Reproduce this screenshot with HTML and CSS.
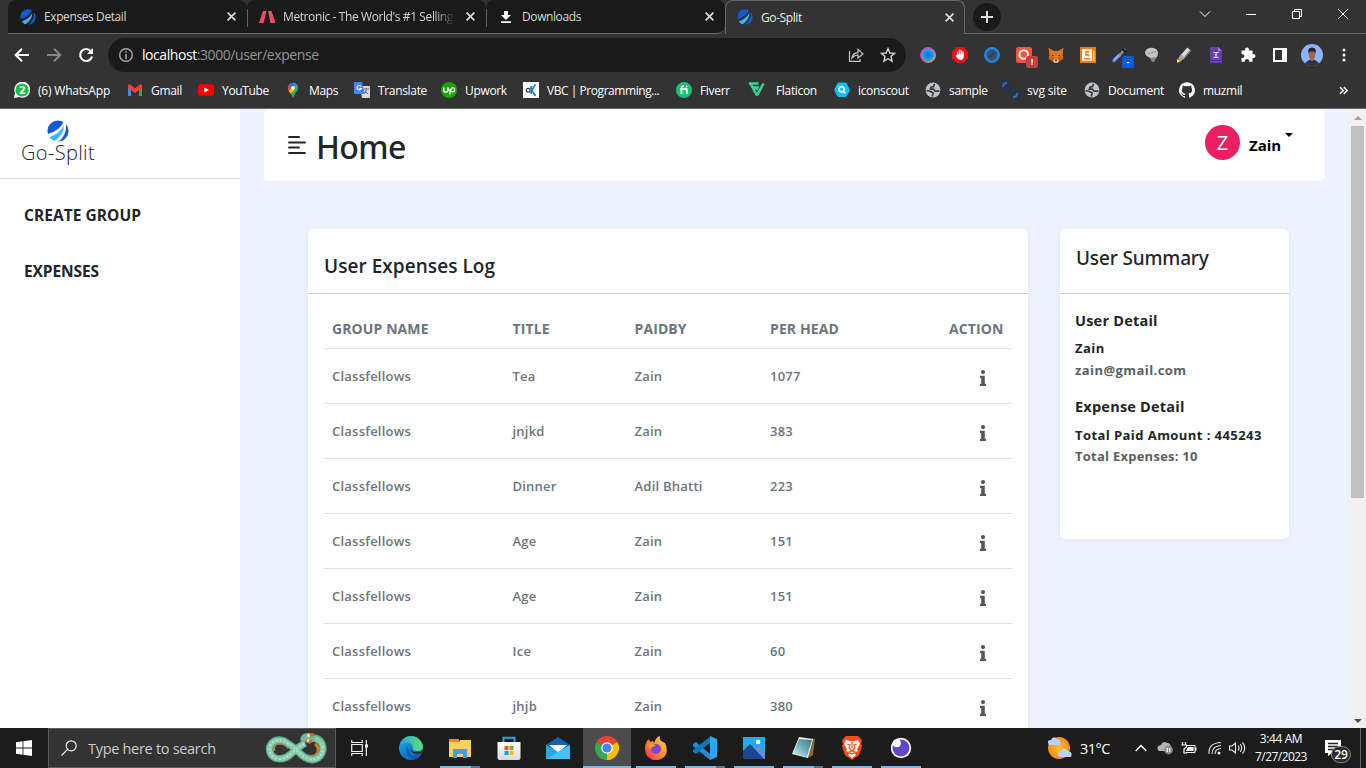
FILE: index.html
```html
<!DOCTYPE html>
<html lang="en">
<head>
<meta charset="utf-8">
<title>Go-Split</title>
<link rel="stylesheet" href="styles.css">
</head>
<body>
<svg class="defs" aria-hidden="true">
  <defs>
    <clipPath id="ball"><circle cx="12" cy="12" r="11.5"/></clipPath>
    <linearGradient id="edgeA" x1="0" y1="0" x2="1" y2="1"><stop offset="0" stop-color="#27a9e5"/><stop offset=".5" stop-color="#0f7fd0"/><stop offset="1" stop-color="#0b4f9e"/></linearGradient>
    <linearGradient id="edgeB" x1="0" y1="0" x2="1" y2="0"><stop offset="0" stop-color="#2aa5df"/><stop offset="1" stop-color="#5fe070"/></linearGradient>
    <linearGradient id="fire" x1="1" y1="0" x2="0" y2="1"><stop offset="0" stop-color="#ffe14a"/><stop offset=".5" stop-color="#ff8a25"/><stop offset="1" stop-color="#f0246c"/></linearGradient>
    <linearGradient id="ring" x1="0" y1="0" x2="1" y2="1"><stop offset="0" stop-color="#d63bb0"/><stop offset=".5" stop-color="#e8489a"/><stop offset="1" stop-color="#ffb03b"/></linearGradient>
    <linearGradient id="snow" x1="0" y1="0" x2="0" y2="1"><stop offset="0" stop-color="#ffffff"/><stop offset="1" stop-color="#d8d8dc"/></linearGradient>
    <linearGradient id="glass" x1="0" y1="1" x2="1" y2="0"><stop offset="0" stop-color="#d9f2f6"/><stop offset=".5" stop-color="#6fb1bd"/><stop offset="1" stop-color="#3a7682"/></linearGradient>
    <radialGradient id="sun"><stop offset="0" stop-color="#ffc53a"/><stop offset="1" stop-color="#f28a1b"/></radialGradient>
    <radialGradient id="blueDot"><stop offset="0" stop-color="#0b6fc0"/><stop offset="1" stop-color="#27b3ff"/></radialGradient>
    <symbol id="logo" viewBox="0 0 24 24"><g clip-path="url(#ball)"><path fill="#0d5bd7" d="M0 0H18.500Q16 11 0 15.500Z"/><path fill="#36b8fb" d="M2 19Q14 15 18.500 6Q19 16 7 24Z"/><path fill="#0d5bd7" d="M20.700 3.500L25 8V24H12Q22 17 20.700 3.500Z"/></g></symbol>
    <symbol id="close" viewBox="0 0 8 8"><path d="M.5.5 7.5 7.5M7.5.5.5 7.5" stroke="currentColor" stroke-width="1.500"/></symbol>
    <symbol id="globe" viewBox="0 0 16 16"><circle cx="8" cy="8" r="7.400" fill="#bfc3c8"/><path d="M9.500 2 8.600 4.600 6 5.200 5.400 7.200H8.500L10.200 9.200H14.500M1.500 8.500 5.600 9.500 8.200 11.200 7.200 14.500" fill="none" stroke="#3a3b3d" stroke-width="1.700"/></symbol>
    <symbol id="info" viewBox="0 0 6 16"><circle cx="3" cy="2.100" r="2.100" fill="#55585b"/><path d="M0 5.800H4.800V13.700H6V16H0V13.700H1.200V8.100H0Z" fill="#55585b"/></symbol>
  </defs>
</svg>

<div class="desktop">
  <header class="chrome">
    <div class="tabstrip">
      <div class="tab tab-first"><svg class="i16"><use href="#logo"/></svg><span class="tab-title">Expenses Detail</span><svg class="x"><use href="#close"/></svg></div>
      <div class="tab tab-mid"><svg class="i16" viewBox="0 0 16 16"><path fill="#f8485e" d="M4 2H7.500L4.500 14H0ZM9 2h3.500L16.500 14H11.500Z"/></svg><span class="tab-title fade">Metronic - The World's #1 Selling</span><svg class="x"><use href="#close"/></svg></div>
      <div class="tab tab-last"><svg class="i16" viewBox="0 0 16 16"><path fill="#fff" d="M6 2h4v4h3L8 11 3 6h3ZM3 12.300h10V14H3Z"/></svg><span class="tab-title">Downloads</span><svg class="x"><use href="#close"/></svg></div>
      <div class="tab tab-active"><svg class="i16"><use href="#logo"/></svg><span class="tab-title">Go-Split</span><svg class="x"><use href="#close"/></svg></div>
      <div class="tab-end"><span class="newtab"><svg width="12" height="12" viewBox="0 0 12 12"><path d="M6 0V12M0 6H12" stroke="#ddd" stroke-width="2"/></svg></span></div>
      <div class="window-buttons">
        <svg viewBox="0 0 12 12"><path d="M1 3.500 6 8.500 11 3.500" class="wl"/></svg>
        <svg viewBox="0 0 12 12"><path d="M1 6.500H11" class="wl"/></svg>
        <svg viewBox="0 0 12 12"><path d="M1.500 3.500H8.500V10.500H1.500ZM3.500 3.500V1.500H10.500V8.500H8.500" class="wl"/></svg>
        <svg viewBox="0 0 12 12"><path d="M1 1 11 11M11 1 1 11" class="wl"/></svg>
      </div>
    </div>

    <div class="toolbar">
      <div class="nav-buttons">
        <svg viewBox="0 0 16 16"><path d="M15 8H2M8 1.700 1.700 8 8 14.300" fill="none" stroke="#fff" stroke-width="2"/></svg>
        <svg viewBox="0 0 16 16"><path d="M1 8H14M8 1.700 14.300 8 8 14.300" fill="none" stroke="#858585" stroke-width="2"/></svg>
        <svg viewBox="0 0 16 16"><path d="M12.800 4.100A6 6 0 1 0 14 9.500" fill="none" stroke="#fff" stroke-width="2.100"/><path d="M15 1V7H9Z" fill="#fff"/></svg>
      </div>
      <div class="address">
        <svg class="i14" viewBox="0 0 14 14"><circle cx="7" cy="7" r="6.300" fill="none" stroke="#a7a9ac" stroke-width="1.400"/><path d="M7 3.200V4.800M7 6V11" stroke="#a7a9ac" stroke-width="1.600"/></svg>
        <span class="url"><b>localhost</b>:3000/user/expense</span>
        <svg class="i16 share" viewBox="0 0 16 16"><path d="M1.500 4V14.300H12V12M4 11Q4.500 6 10 5.600V2.300L15 7 10 11V8Q6.500 8 4 11Z" fill="none" stroke="#c5c5c5" stroke-width="1.200"/></svg>
        <svg class="i16" viewBox="0 0 16 16"><path d="M8 1.600 9.900 6 14.600 6.400 11 9.500 12.100 14.200 8 11.700 3.900 14.200 5 9.500 1.400 6.400 6.100 6Z" fill="none" stroke="#d0d0d0" stroke-width="1.400"/></svg>
      </div>
      <div class="extensions">
        <svg viewBox="0 0 16 16"><circle cx="8" cy="8" r="7.200" fill="url(#blueDot)" stroke="url(#ring)" stroke-width="1.500"/></svg>
        <svg viewBox="0 0 16 16"><path fill="#e11313" d="M4.700 0h6.600L16 4.700v6.600L11.300 16H4.700L0 11.300V4.700Z"/><path d="M5.700 5V9M7.500 3.200V8M9.300 3.500V8M11 5V9" stroke="#fff" stroke-width="1.300" stroke-linecap="round"/><path fill="#fff" d="M5 7.500H11.700Q12 13 8.800 13 6 13 3.500 8.700Z"/></svg>
        <svg viewBox="0 0 16 16"><circle cx="8" cy="8" r="6.800" fill="#3a5368" stroke="#168cf0" stroke-width="2.300"/><path d="m5 11 6-6" stroke="#2c4254" stroke-width="2"/></svg>
        <span class="badged"><svg viewBox="0 0 16 16"><rect width="16" height="16" rx="2" fill="#fb513c"/><circle cx="7.700" cy="7.500" r="4.300" fill="none" stroke="#fff" stroke-width="2"/></svg><i class="badge red">!</i></span>
        <svg viewBox="0 0 16 16"><path fill="#e27520" d="M.5 1 6 4h4l5.500-3-1 7 1 4-4 2-2 2h-3l-2-2-4-2 1-4Z"/><path fill="#b85516" d="m1 11 4-1 1 4-4-1ZM15 11l-4-1-1 4 4-1Z"/><path fill="#ddc5ae" d="m5 12 2 1h2l2-1-1 3.500H6Z"/><path fill="#282828" d="M4 7.500 6.300 9H4ZM12 7.500 9.700 9H12ZM7 13h2v1H7Z"/></svg>
        <svg viewBox="0 0 16 16"><path fill="#f57c00" d="M0 0H16V16H0Z"/><path fill="#fff" d="M2 2.300H12V13.700H2ZM13 4H14.300V13.700H13Z"/><path d="M9.300 4.800H6V8H8.500V9.500M4 11.700h6.500" fill="none" stroke="#f57c00" stroke-width="1.500"/></svg>
        <span class="badged"><svg viewBox="0 0 16 16"><path d="m2 13.500 5.500-5.500" stroke="#5c98e8" stroke-width="3.200" stroke-linecap="round"/><path d="m2.300 12.500 5-5" stroke="#c8defa" stroke-width="1"/><path d="m7 9 6-7" stroke="#8b9194" stroke-width="2.500"/><path d="m10.500 2 3.500 3.500" stroke="#17191b" stroke-width="1.800"/></svg><i class="badge blue">-</i></span>
        <svg viewBox="0 0 16 16"><path d="M1 5Q3 .5 8 .8 14 1.500 14 6 14 10 10.500 12L10 15 5.500 10.500Q1 9 1 5Z" fill="#c4c5c5"/><path d="M6 11 12 10 10.500 14.500 8 15Z" fill="#858585"/><path d="M4.500 6.500 12 4.500" stroke="#666" stroke-dasharray="1.500 1.500"/></svg>
        <svg viewBox="0 0 16 16"><path d="m6.500 9.500 6.500-7.500" stroke="#ddd" stroke-width="4.500"/><path d="m9 10 6-7" stroke="#777" stroke-width="1.500"/><path d="m5 7 4 4-4 3-3-2Z" fill="#aaa"/><path d="m1 12 4 2-4 2Z" fill="#fbef18"/></svg>
        <svg viewBox="0 0 16 16"><path fill="#673ab7" d="M2 0h8l4 4v12H2Z"/><path fill="#a387d2" d="M10 0v4h4Z"/><path d="M5.500 5.500h5M8 5.500v5M5.500 10.500h5" stroke="#fff" stroke-width="1.200"/></svg>
        <svg viewBox="0 0 16 16"><path fill="#fff" d="M1.500 3.500H5Q4.800.5 7 .5T9 3.500H12.500V7Q15.500 6.800 15.500 9T12.500 11V14.800H9.200Q9.300 12 7 12T4.800 14.800H1.500V11Q4.300 11 4.300 9T1.500 7Z"/></svg>
        <svg viewBox="0 0 16 16"><path fill="none" stroke="#fff" stroke-width="2" d="M2 2H14V14H2Z"/><path fill="#fff" d="M10 2h4v12h-4Z"/></svg>
        <svg class="profile" viewBox="0 0 22 22"><clipPath id="face"><circle cx="11" cy="11" r="11"/></clipPath><g clip-path="url(#face)"><path fill="#8db3fb" d="M0 0h22v22H0Z"/><path fill="#2b3549" d="m4 19 4-3h6l4 3v4H4Z"/><path fill="#9b674c" d="M8 7h6v6l-2 4h-2l-2-4Z"/><path fill="#222028" d="M7.500 10Q6 3.500 11 3.500t3.500 6.500l-1-2.500H8.500Z"/></g></svg>
        <svg viewBox="0 0 16 16"><circle cx="8" cy="3" r="1.500" fill="#fff"/><circle cx="8" cy="8" r="1.500" fill="#fff"/><circle cx="8" cy="13" r="1.500" fill="#fff"/></svg>
      </div>
    </div>

    <nav class="bookmarks">
      <a class="wide"><svg viewBox="0 0 16 16"><path fill="#fff" d="M0 16 1 11A8 8 0 1 1 5 15Z"/><circle cx="8" cy="8" r="6.600" fill="#10bf4c"/><text x="8" y="12" text-anchor="middle" class="wa">2</text></svg><span>(6) WhatsApp</span></a>
      <a><svg viewBox="0 0 16 16"><path fill="#4285f4" d="M1 3.500 4 6V14H1Z"/><path fill="#34a853" d="M12 6 15 3.500V14H12Z"/><path fill="#ea4335" d="M1 6V3L2.500 2 8 6.300 13.500 2 15 3V6L8 11Z"/></svg><span>Gmail</span></a>
      <a><svg viewBox="0 0 16 16"><rect y="2.200" width="16" height="11.600" rx="2.600" fill="#f00"/><path fill="#fff" d="m6.300 5.500 4.500 2.500-4.500 2.500Z"/></svg><span>YouTube</span></a>
      <a><svg viewBox="0 0 16 16"><path fill="#34a853" d="M2.800 6A5.200 5.200 0 1 1 13.200 6Q13 8.500 10.500 11L8 16 5.500 11Q3 8.500 2.800 6Z"/><path fill="#4285f4" d="M7 .9A5.200 5.200 0 0 1 12.300 3L8.500 7Z"/><path fill="#ea4335" d="M4 2.700 7 5.500 4 9Q1.500 5.500 4 2.700Z"/><path fill="#1a73e8" d="M4 2.700Q5.300 1 7.500.8L9 4 6.500 5.500Z"/><path fill="#fbbc04" d="M3.700 9 7 5.500 9.500 8 5.800 11.800Z"/><circle cx="8" cy="5.800" r="1.900" fill="#fff"/></svg><span>Maps</span></a>
      <a><svg viewBox="0 0 16 16"><path fill="#d8d9dd" d="M6 4h9q1 0 1 1v10q0 1-1 1H8Z"/><path fill="#4285f4" d="M0 0H8L11 12H1Q0 12 0 11Z"/><path d="M7 4.500A2.200 2.200 0 1 0 7.200 6.500H5.300" fill="none" stroke="#fff" stroke-width="1.100"/><path d="M10 7h5M12.300 6v1q0 3-2 5M11 9l3 3" fill="none" stroke="#70757a"/></svg><span>Translate</span></a>
      <a><svg viewBox="0 0 16 16"><circle cx="8" cy="8" r="8" fill="#14a800"/><path d="M2.800 5.500v2.700q0 2 2 2t2-2V5.500q1 3.200 3.600 4.400M8.600 12.500l1.200-5q.7-1.800 2.200-1.800t1.600 2-1.700 2.200q-2 0-3-2" fill="none" stroke="#fff" stroke-width="1.300"/></svg><span>Upwork</span></a>
      <a class="tight"><svg viewBox="0 0 16 16"><path fill="#fff" d="M0 0h16v16H0Z"/><circle cx="5.200" cy="8.200" r="1.900" fill="none" stroke="#26364b" stroke-width="1.200"/><path d="M8.200 4V12M12.500 2.500 8.800 8l3.700 6" fill="none" stroke="#1684df" stroke-width="1.800"/></svg><span>VBC | Programming...</span></a>
      <a><svg viewBox="0 0 16 16"><circle cx="8" cy="8" r="8" fill="#1dbf73"/><path d="M5.500 12V6.200Q5.500 4 8 4M4 7.200H10.800V12" fill="none" stroke="#fff" stroke-width="1.700"/><circle cx="10.500" cy="4.400" r="1" fill="#fff"/></svg><span>Fiverr</span></a>
      <a><svg class="flat" viewBox="0 0 16 16"><path d="M0 1.500H9.500M1.500 1.500 8 13.500M4 5.500H8.500L7.500 8M14.500 1.500 8 13.500" fill="none" stroke="#3ed19b" stroke-width="2.600"/></svg><span>Flaticon</span></a>
      <a><svg viewBox="0 0 16 16"><path fill="#08c0fa" d="M5 .5h6q1 0 1.700 1L15.500 7q.5 1 0 2l-2.800 5q-.7 1-1.700 1H5q-1 0-1.700-1L.5 9q-.5-1 0-2l2.800-5.500Q4 .5 5 .5Z"/><circle cx="7.500" cy="7.200" r="2.600" fill="none" stroke="#fff" stroke-width="1.600"/><path d="m9.300 9.300 2 2" stroke="#fff" stroke-width="1.800"/></svg><span>iconscout</span></a>
      <a><svg><use href="#globe"/></svg><span>sample</span></a>
      <a><svg viewBox="0 0 16 16"><path d="M.8 5Q1 1 5 .8M15.200 11Q15 15 11 15.200" fill="none" stroke="#1976ed" stroke-width="1.800"/><path d="M11 5Q8 3.500 6 5t1 3 3 2.500-5 1" fill="none" stroke="#17365f" stroke-width="2.200"/></svg><span class="svgsite">svg site</span></a>
      <a><svg><use href="#globe"/></svg><span>Document</span></a>
      <a><svg viewBox="0 0 16 16"><path fill="#fff" d="M8 .2a8 8 0 0 0-2.500 15.600c.4.1.5-.2.5-.4v-1.500c-2.200.5-2.700-1-2.700-1-.4-.9-.9-1.100-.9-1.100-.7-.5.1-.5.1-.5.8.1 1.200.8 1.200.8.7 1.200 1.900.9 2.300.7.1-.5.3-.9.5-1.100-1.800-.2-3.600-.9-3.600-4 0-.9.3-1.600.8-2.100-.1-.2-.4-1 .1-2.100 0 0 .7-.2 2.200.8a7.500 7.500 0 0 1 4 0c1.500-1 2.200-.8 2.200-.8.4 1.100.2 1.900.1 2.100.5.6.8 1.300.8 2.200 0 3-1.900 3.700-3.700 3.900.3.3.6.8.6 1.500v2.200c0 .2.1.5.5.4A8 8 0 0 0 8 .2Z"/></svg><span>muzmil</span></a>
      <a><svg class="more" viewBox="0 0 8 8"><path d="M.8 1 3.800 4l-3 3M4.300 1l3 3-3 3" fill="none" stroke="#fff" stroke-width="1.300"/></svg></a>
    </nav>
  </header>

  <div class="page">
    <aside class="sidebar">
      <div class="brand"><svg class="brand-mark"><use href="#logo"/></svg><span class="brand-name">Go-Split</span></div>
      <a class="side-link create">CREATE GROUP</a>
      <a class="side-link exp">EXPENSES</a>
    </aside>
    <main class="content">
      <div class="topbar">
        <svg class="menu" viewBox="0 0 18 18"><path d="M1 1H11M1 6.500H17M1 11.500H11M1 17H17" stroke="#212529" stroke-width="1.900" stroke-linecap="round"/></svg>
        <h1>Home</h1>
        <span class="avatar">Z</span><span class="user">Zain</span><span class="caret"></span>
      </div>
      <div class="cards">
        <section class="card log">
          <div class="card-head"><h2>User Expenses Log</h2></div>
          <div class="table">
            <div class="row head"><span>GROUP NAME</span><span>TITLE</span><span>PAIDBY</span><span>PER HEAD</span><span>ACTION</span></div>
            <div class="row"><span>Classfellows</span><span>Tea</span><span>Zain</span><span>1077</span><svg><use href="#info"/></svg></div>
            <div class="row"><span>Classfellows</span><span>jnjkd</span><span>Zain</span><span>383</span><svg><use href="#info"/></svg></div>
            <div class="row"><span>Classfellows</span><span>Dinner</span><span>Adil Bhatti</span><span>223</span><svg><use href="#info"/></svg></div>
            <div class="row"><span>Classfellows</span><span>Age</span><span>Zain</span><span>151</span><svg><use href="#info"/></svg></div>
            <div class="row"><span>Classfellows</span><span>Age</span><span>Zain</span><span>151</span><svg><use href="#info"/></svg></div>
            <div class="row"><span>Classfellows</span><span>Ice</span><span>Zain</span><span>60</span><svg><use href="#info"/></svg></div>
            <div class="row"><span>Classfellows</span><span>jhjb</span><span>Zain</span><span>380</span><svg><use href="#info"/></svg></div>
          </div>
        </section>
        <section class="card summary">
          <div class="card-head"><h3>User Summary</h3></div>
          <div class="summary-body">
            <h4>User Detail</h4>
            <p class="name">Zain</p>
            <p class="muted">zain@gmail.com</p>
            <h4 class="second">Expense Detail</h4>
            <p class="paid">Total Paid Amount : 445243</p>
            <p class="muted total">Total Expenses: 10</p>
          </div>
        </section>
      </div>
    </main>
    <div class="scrollbar"><i class="up"></i><div class="thumb"></div><i class="down"></i></div>
  </div>

  <footer class="taskbar">
    <div class="start"><svg width="16" height="16" viewBox="0 0 16 16"><path fill="#fff" d="M0 2.300 6.600 1.300V7.500H0ZM7.400 1.200 16 0V7.500H7.400ZM0 8.400H6.600V14.700L0 13.800ZM7.400 8.400H16V16L7.400 14.800Z"/></svg></div>
    <div class="search">
      <svg width="16" height="16" viewBox="0 0 16 16"><circle cx="10.200" cy="5.800" r="5" fill="none" stroke="#eee" stroke-width="1.200"/><path d="M6.600 9.400.5 15.500" stroke="#eee" stroke-width="1.200"/></svg>
      <span>Type here to search</span>
      <svg class="snake" width="62" height="34" viewBox="0 0 62 34"><path d="M9 20Q7 13 14 12 20 12 24 17M38 24Q50 28 53 21 54 16 50 13" fill="none" stroke="#dc7a21" stroke-width="3"/><path d="M40 12Q33 16 27 22 19 30 10 27 3 23 5 15 9 7 19 10 23 12 29 17L38 25Q46 31 53 27 60 21 57 13 54 6 44 7" fill="none" stroke="#55a98b" stroke-width="7.500"/><path d="M40 12Q33 16 27 22 19 30 10 27 3 23 5 15 9 7 19 10 23 12 29 17L38 25Q46 31 53 27 60 21 57 13 54 8 48 7" fill="none" stroke="#8dcdaf" stroke-width="5"/><path d="M39 13Q33 16 27 22 19 30 10 27 3 23 5 15 9 7 19 10 23 12 29 17L38 25Q46 31 53 27 60 21 57 13" fill="none" stroke="#c2ecd2" stroke-width="1.500" stroke-dasharray="1.500 2.500"/><path d="M35 9q1-8 10-7l6 4-3 5q-7 2-13-2Z" fill="#6bbb9c"/><path d="m42 3 6-1 2 3-7 1ZM41 8l7 1-3 4-5-2Z" fill="#d86d2a"/><circle cx="43.500" cy="4.500" r="1.500" fill="#f1eadb"/><circle cx="43" cy="9.500" r="1.200" fill="#f1eadb"/></svg>
    </div>
    <div class="taskview"><svg width="17" height="16" viewBox="0 0 17 16"><path d="M.7 0V2.500H11.300V0M.7 4.500H11.300V11.500H.7ZM.7 16V13.500H11.300V16M15.300 0V16" fill="none" stroke="#f2f2f2" stroke-width="1.200"/><path fill="#fff" d="M14 4.500H17V7.500H14Z"/></svg></div>
    <div class="apps">
      <div class="app"><svg viewBox="0 0 24 24"><circle cx="12" cy="12" r="12" fill="url(#edgeA)"/><path fill="url(#edgeB)" d="M1 9Q4 0 12 0q8 0 11.800 9 1 6-5 6-6 0-5-3-1-7-8-5Q3 7 1 9Z"/><path fill="#0b5cae" d="M8 10q-3 9 5 12 6 2 9-3-10 4-12-4Z"/><path fill="#1c1c1c" d="M13 10q1 3-1 5 3 4 10 2l2-2q-4 2-9 1-3-1-2-3Z"/></svg></div>
      <div class="app run stack"><svg viewBox="0 0 24 24"><path fill="#dc9600" d="M1 3H11V8H1Z"/><path fill="#ffcf5c" d="M1 6 11 6 12 4H23V21H1Z"/><path fill="#3d9fe5" d="M5 22V13H19V22H15V18H9V22Z"/></svg></div>
      <div class="app"><svg viewBox="0 0 24 24"><path d="M6.500 7V1.800H17.500V7" fill="none" stroke="#28a9e2" stroke-width="2"/><path fill="url(#snow)" d="M.5 6H23.500V22q0 2-2 2h-19q-2 0-2-2Z"/><path fill="#f35325" d="M7.500 10H11.500V14H7.500Z"/><path fill="#81bc06" d="M12.500 10H16.500V14H12.500Z"/><path fill="#05a6f0" d="M7.500 15H11.500V19H7.500Z"/><path fill="#ffba08" d="M12.500 15H16.500V19H12.500Z"/></svg></div>
      <div class="app"><svg viewBox="0 0 24 24"><path fill="#1262af" d="M0 9 12 1 24 9V15H0Z"/><path fill="#f5f5f5" d="M3 9H21L12 17Z"/><path fill="#25a8e5" d="M0 9 12 16 24 9V23H0Z"/><path fill="#43c3f5" d="M0 23 24 9V23Z"/></svg></div>
      <div class="app current run"><svg viewBox="0 0 24 24"><path fill="#ea4335" d="M12 12 1.600 6A12 12 0 0 1 22.400 6Z"/><path fill="#fbbc04" d="M12 12 22.400 6A12 12 0 0 1 12 24Z"/><path fill="#34a853" d="M12 12V24A12 12 0 0 1 1.600 6Z"/><path fill="#ea4335" d="M12 6H22.400L19 3H10Z"/><path fill="#fbbc04" d="m17.200 15-5.200 9h3l5-7Z"/><circle cx="12" cy="12" r="5.800" fill="#fff"/><circle cx="12" cy="12" r="4.500" fill="#4285f4"/></svg></div>
      <div class="app run"><svg viewBox="0 0 24 24"><path fill="url(#fire)" d="M3 5 5 3 6 6 9 5 10 7Q12 1 16 0q-1 5 3 6l2 1q4 10-1 14-9 7-17-1-4-8 0-15Z"/><circle cx="12" cy="13" r="5" fill="#8144d6"/><path fill="#ff9b2f" d="M3 9q5-3 9 1-5 0-5 4Z"/></svg></div>
      <div class="app run stack"><svg viewBox="0 0 24 24"><path fill="#1b8fd8" d="m0 8 3-2L17 18V24L0 10Z"/><path fill="#0b78c1" d="m0 16 3 2L18 6V0L0 14Z"/><path fill="#29a8f2" d="m17 0 7 3V21l-7 3Z"/></svg></div>
      <div class="app run"><svg viewBox="0 0 24 24"><path fill="#27a8e8" d="M1 1H23V23H1Z"/><path fill="#5e91db" d="M11 15 17 8 23 14V23H11Z"/><path fill="#1c4691" d="M1 15 8 8 22 23H1Z"/><circle cx="16" cy="6" r="2.300" fill="#fff"/></svg></div>
      <div class="app run stack"><svg viewBox="0 0 24 24"><path fill="#8b672c" d="M21 2 24 3 22 19 17 22Z"/><path fill="#eef0ee" d="M8 1 22 3 17 22 1 18Z"/><path fill="url(#glass)" d="M8 3 21 4 16 21 2 17Z"/></svg></div>
      <div class="app run"><svg viewBox="0 0 24 24"><path fill="#ff4b17" d="M6 0H18L22 4 21 8 22 10 19 19 12 24 5 19 2 10 3 8 2 4Z"/><path fill="#fff" d="M6 4 10 5H14L18 4 20 8 17 13 18 15 14 17 16 19 12 22 8 19 10 17 6 15 7 13 4 8Z"/><path d="m7 8 3 1-1 3 3 3 3-3-1-3 3-1M12 6v6M9 16l3-1 3 1-3 2Z" fill="none" stroke="#fb5418" stroke-width="1.300"/></svg></div>
      <div class="app run"><svg viewBox="0 0 24 24"><circle cx="12" cy="12" r="10.200" fill="#fff"/><circle cx="12" cy="12" r="8.500" fill="#6148c6"/><circle cx="7.800" cy="7.200" r="4" fill="#fff"/></svg></div>
    </div>
    <div class="tray">
      <svg class="weather" width="26" height="24" viewBox="0 0 26 24"><circle cx="12" cy="12" r="11" fill="url(#sun)"/><path fill="#b9d2fb" d="M2 9Q-1 4 4 4 6-1 10 3q5 1 3 6ZM12 21q-3-5 2-6 3-5 7 0 5 1 3 6Z"/></svg>
      <span class="temp">31°C</span>
      <svg class="up-arrow" width="12" height="8" viewBox="0 0 12 8"><path d="m.7 7 5.300-5.500L11.300 7" fill="none" stroke="#fff" stroke-width="1.400"/></svg>
      <svg class="cloud" width="16" height="14" viewBox="0 0 16 14"><path fill="#b3b3b3" d="M1 9Q-1 5 4 4 6-1 10 2q4 0 4 5L8 10H2Z"/><circle cx="11.500" cy="9" r="4.400" fill="#898989"/><path d="M10.200 7V11M12.800 7V11" stroke="#fff" stroke-width="1.200"/></svg>
      <svg class="battery" width="16" height="13" viewBox="0 0 16 13"><path d="M1.500 0V3M4.500 0V3M.5 3H5.500V5L3 7V11H6" fill="none" stroke="#fff" stroke-width="1.200"/><path d="M6 3.500H14V10.500H5" fill="none" stroke="#fff"/><path fill="#fff" d="M7 5H12.500V9H5ZM14 5.500H15.500V8.500H14Z"/></svg>
      <svg class="wifi" width="14" height="14" viewBox="0 0 14 14"><path d="M1 13Q0 2 13 1.500M4 13Q4 5 13 4.500M7 13q0-5 6-5.500" fill="none" stroke="#ddd" stroke-width="1.100"/><circle cx="11" cy="12" r="1.500" fill="#fff"/></svg>
      <svg class="sound" width="17" height="14" viewBox="0 0 17 14"><path d="M.6 5H3L6.500 2V12L3 9H.6ZM9 4.500q2 2.500 0 5M11.200 3q3 4 0 8M13.500 1.300q4.500 5.700 0 11.400" fill="none" stroke="#eee" stroke-width="1.100"/></svg>
      <div class="clock"><span>3:44 AM</span><span class="date">7/27/2023</span></div>
      <div class="notes"><svg width="17" height="17" viewBox="0 0 17 17"><path fill="#fff" d="M0 0H16V13H7L3 16V13H0Z"/><path d="M3 3.500H13M3 6.500H13M3 9.500H9" stroke="#222" stroke-width="1.300"/></svg><b>29</b></div>
    </div>
  </footer>
</div>
</body>
</html>
```
FILE: styles.css
```css
* { box-sizing: border-box; }
body { margin: 0; overflow: hidden; font-family: "Open Sans", "Noto Sans", sans-serif; color: #212529; }
svg { display: block; flex: none; }
h1, h2, h3, h4, p { margin: 0; }
.defs { position: absolute; width: 0; height: 0; }
.desktop { width: 1366px; height: 768px; display: flex; flex-direction: column; overflow: hidden; }
.i16 { width: 16px; height: 16px; }
.i14 { width: 14px; height: 14px; }

/* browser */
.chrome { height: 109px; background: #333; color: #fff; border-bottom: 1px solid #686868; font-size: 12px; }
.tabstrip { height: 34px; padding-left: 8px; display: flex; }
.tab { height: 34px; display: flex; align-items: center; padding: 0 11px 0 12px; background: #1a1a1a; border-bottom: 1px solid #686868; color: #d5d5d5; }
.tab-first { width: 239px; border-radius: 8px 8px 0 0; }
.tab-mid { width: 239px; border-radius: 8px 8px 0 0; background: linear-gradient(#606060, #606060) 0 9px / 1px 18px no-repeat #1a1a1a; }
.tab-last { width: 239px; border-radius: 8px 8px 8px 0; background: linear-gradient(#606060, #606060) 0 9px / 1px 18px no-repeat #1a1a1a; }
.tab-active { width: 240px; background: #333; border: 1px solid #686868; border-bottom: 0; border-radius: 8px 8px 0 0; color: #eee; padding: 0 10px 1px 11px; }
.tab-title { flex: 1; margin-left: 8px; white-space: nowrap; overflow: hidden; letter-spacing: -.4px; }
.fade { margin-right: 11px; -webkit-mask-image: linear-gradient(90deg, #000 88%, transparent); mask-image: linear-gradient(90deg, #000 88%, transparent); }
.x { width: 9px; height: 9px; color: #ddd; }
.tab-end { flex: 1; border-bottom: 1px solid #686868; padding: 3px 0 0 8px; }
.newtab { width: 28px; height: 28px; border-radius: 50%; background: #1a1a1a; display: grid; place-items: center; }
.window-buttons { width: 184px; display: flex; align-items: center; justify-content: space-around; border-bottom: 1px solid #686868; padding-bottom: 5px; }
.window-buttons svg { width: 12px; height: 12px; }
.wl { fill: none; stroke: #fff; stroke-width: 1; }
.toolbar { height: 42px; display: flex; align-items: center; }
.nav-buttons { width: 108px; padding-left: 14px; display: flex; gap: 16px; }
.nav-buttons svg { width: 16px; height: 16px; }
.address { width: 798px; height: 34px; border-radius: 17px; background: #1a1a1a; display: flex; align-items: center; padding: 0 10px 0 11px; }
.url { flex: 1; margin-left: 9px; padding-bottom: 1px; font-size: 14px; color: #949494; letter-spacing: -.43px; }
.url b { font-weight: 400; color: #fff; }
.share { margin-right: 16px; }
.extensions { padding-left: 14px; display: flex; align-items: center; gap: 16px; }
.extensions svg { width: 16px; height: 16px; }
.extensions .profile { width: 22px; height: 22px; margin: 0 -3px; }
.badged { position: relative; }
.badge { position: absolute; left: 10px; top: 9px; width: 12px; height: 12px; border-radius: 2px; font: bold 9px/12px "Open Sans", sans-serif; text-align: center; color: #fff; }
.red { background: #c5413d; }
.blue { background: #0b5bd8; }
.bookmarks { height: 28px; padding-left: 14px; display: grid; grid-template-columns: 113px 71px 87px 69px 87px 82px 153px 73px 85px 91px 77px 82px 95px 160px 20px; align-items: center; }
.bookmarks a { display: flex; align-items: center; gap: 8px; white-space: nowrap; letter-spacing: -.33px; }
.bookmarks .wide { letter-spacing: -.2px; }
.bookmarks .tight { letter-spacing: -.45px; }
.bookmarks .svgsite { letter-spacing: -.15px; margin-left: 1px; }
.bookmarks svg { width: 16px; height: 16px; }
.bookmarks .flat { margin-right: 3px; }
.bookmarks .more { width: 9px; height: 9px; }
.wa { font: bold 11px "Open Sans", sans-serif; fill: #fff; }

/* application */
.page { height: 619px; display: flex; background: #eef2fe; overflow: hidden; }
.sidebar { width: 240px; background: #fff; }
.brand { height: 70px; border-bottom: 1px solid #dcdcdc; padding: 11px 0 0 21px; width: 240px; }
.brand-mark { width: 22px; height: 22px; margin-left: 26px; }
.brand-name { display: block; font: 300 20px/22px "Open Sans", sans-serif; color: #222; letter-spacing: .35px; }
.side-link { display: block; margin-left: 24px; font-size: 15.5px; line-height: 24px; font-weight: 700; letter-spacing: .05px; }
.create { margin-top: 24px; }
.exp { margin-top: 32px; }
.side-link.exp { letter-spacing: -.1px; }
.content { width: 1109px; padding-left: 24px; }
.topbar { width: 1061px; height: 72px; background: #fff; border-radius: 5px; display: flex; align-items: center; padding-left: 24px; }
.menu { width: 18px; height: 18px; }
.topbar h1 { flex: 1; margin: 3px 0 0 10px; font: 500 32px/40px "Noto Sans", "Open Sans", sans-serif; letter-spacing: -.6px; }
.avatar { width: 35px; height: 35px; border-radius: 50%; background: #e91e63; color: #fff; display: grid; place-items: center; font: 20px "Open Sans", sans-serif; margin-top: -5px; }
.user { color: #000; font-size: 15px; font-weight: 700; margin: 0 -1px 0 9px; width: 37px; }
.caret { width: 8px; border: 4px solid transparent; border-top-color: #000; border-bottom: 0; margin: -21px 32px 0 0; }
.cards { padding: 48px 0 0 44px; display: flex; align-items: flex-start; gap: 32px; }
.card { background: #fff; border-radius: 5px; box-shadow: 0 1px 4px rgba(80, 100, 160, .08); }
.card-head { height: 65px; border-bottom: 1px solid #d0d0d0; padding-left: 16px; }
.log { width: 720px; height: 510px; }
.log h2 { padding-top: 24px; font-size: 19px; line-height: 26px; font-weight: 650; letter-spacing: .05px; }
.table { margin: 0 16px; }
.row { height: 55px; border-bottom: 1px solid #dee2e6; display: grid; grid-template-columns: 180.5px 122px 135.5px 179px 1fr; padding-left: 8px; align-items: center; color: #6c757d; font-size: 13px; font-weight: 600; letter-spacing: .23px; }
.row span { white-space: nowrap; }
.row svg { width: 6px; height: 16px; margin: 4px 0 0 31px; }
.head { font-size: 14px; font-weight: 700; padding-top: 15px; letter-spacing: .1px; }
.summary { width: 229px; height: 310px; }
.summary h3 { padding-top: 15px; font: 500 19px/28px "Noto Sans", "Open Sans", sans-serif; letter-spacing: -.15px; }
.summary-body { padding: 16px 0 0 15px; white-space: nowrap; }
.summary h4 { font-size: 14.5px; line-height: 22px; font-weight: 700; letter-spacing: .22px; }
.summary p { font-size: 13px; line-height: 22px; font-weight: 700; letter-spacing: .43px; }
.summary .name { margin-top: 5px; }
.summary .muted { color: #5b5f63; }
.summary .second { margin-top: 15px; }
.summary .paid { margin-top: 6px; }
.summary .total { margin-top: -1px; letter-spacing: .25px; }
.scrollbar { width: 17px; background: #f1f1f1; padding: 7px 2px 5px; display: flex; flex-direction: column; align-items: center; }
.up, .down { width: 8px; border: 4px solid transparent; }
.up { border-top: 0; border-bottom-color: #a3a3a3; }
.down { border-bottom: 0; border-top-color: #505050; }
.thumb { width: 13px; height: 372px; background: #c1c1c1; margin: 6px 0 auto; }

/* taskbar */
.taskbar { height: 40px; background: #1c1c1c; color: #fff; display: flex; }
.start { width: 48px; display: grid; place-items: center; }
.search { width: 288px; background: #333; border: 1px solid #5b5b5b; display: flex; align-items: center; padding-left: 12px; }
.search span { flex: 1; margin-left: 11px; font-size: 14.5px; color: #ccc; letter-spacing: -.3px; }
.snake { margin-right: 8px; }
.taskview { width: 51px; padding: 12px 0 0 15px; }
.apps { display: flex; gap: 1px; width: 660px; }
.app { width: 48px; height: 40px; display: flex; flex-direction: column; align-items: center; padding-top: 8px; }
.app svg { width: 24px; height: 24px; }
.run::after { content: ""; width: 40px; height: 2px; margin-top: 6px; background: #76b9ed; }
.stack::after { background: linear-gradient(90deg, #76b9ed 31px, #4c7899 31px); }
.current { background: #4b4b4b; }
.current::after { width: 48px; }
.tray { flex: 1; display: flex; align-items: center; border-right: 1px solid #666; margin-right: 5px; }
.temp { width: 36px; margin-left: 7px; font-size: 14.5px; letter-spacing: -.5px; white-space: nowrap; }
.up-arrow { margin-left: 19px; }
.cloud { margin-left: 10px; }
.battery { margin-left: 8px; }
.wifi { margin-left: 11px; }
.sound { margin-left: 7px; }
.clock { width: 56px; margin: -1px 0 0 7px; display: flex; flex-direction: column; align-items: center; font-size: 12px; line-height: 18px; letter-spacing: -.4px; white-space: nowrap; }
.date { letter-spacing: -.55px; }
.notes { position: relative; margin-left: 16px; }
.notes b { position: absolute; left: 6px; top: 6px; width: 20px; height: 17px; border: 1px solid #888; border-radius: 9px; background: #2a2a2a; font: 600 12px/15px "Open Sans", sans-serif; text-align: center; }
```
